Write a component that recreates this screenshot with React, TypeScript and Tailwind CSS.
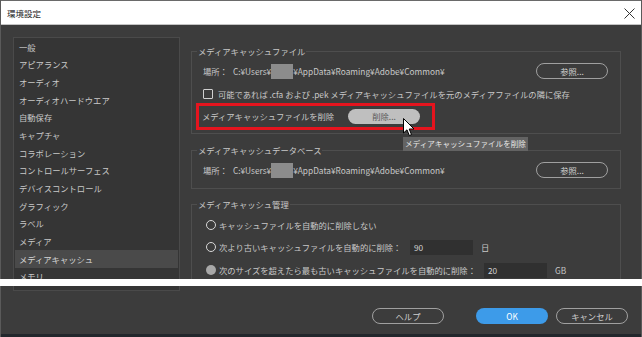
import React from "react";

const items = [
  "一般",
  "アピアランス",
  "オーディオ",
  "オーディオハードウエア",
  "自動保存",
  "キャプチャ",
  "コラボレーション",
  "コントロールサーフェス",
  "デバイスコントロール",
  "グラフィック",
  "ラベル",
  "メディア",
  "メディアキャッシュ",
  "メモリ",
];

const PathRow = () => (
  <div className="flex items-center h-[16px] pl-[7px] pr-[8px] justify-between">
    <div className="flex items-center whitespace-nowrap">
      <span>場所：</span>
      <span className="ml-[5px]">C:¥Users¥</span>
      <span className="inline-block w-[22px] h-[15px] bg-[#8c8c8c]"></span>
      <span>¥AppData¥Roaming¥Adobe¥Common¥</span>
    </div>
    <button className="w-[72px] h-[16px] rounded-full border border-[#a0a0a0] text-[#d0d0d0] flex items-center justify-center">
      参照...
    </button>
  </div>
);

const Radio = ({ filled }: { filled?: boolean }) => (
  <span
    className={
      filled
        ? "w-[10px] h-[10px] rounded-full bg-[#a8a8a8] shrink-0"
        : "w-[10px] h-[10px] rounded-full border-[1.5px] border-[#d8d8d8] shrink-0"
    }
  ></span>
);

export default function App() {
  return (
    <div className="relative w-[642px] h-[337px] overflow-hidden bg-[#3c3c3c] text-[#c8c8c8] text-[8.3px] leading-none font-['Noto_Sans_CJK_JP',sans-serif]">
      {/* upper half of the dialog */}
      <div className="h-[279px] flex flex-col overflow-hidden border-x border-[#5a5a5a]">
        <div className="h-[25px] shrink-0 bg-white border-t border-[#6a6a6a] border-b border-b-[#c4c4c4] flex items-center justify-between pl-[6px] pr-[6px] pt-[1px]">
          <span className="text-[8.5px] text-[#222]">環境設定</span>
          <svg width="11" height="11" viewBox="0 0 11 11">
            <path d="M0.5 0.5 L10.5 10.5 M10.5 0.5 L0.5 10.5" stroke="#333" strokeWidth="1" />
          </svg>
        </div>

        <div className="flex flex-1 pl-[12px] pt-[12px] gap-[11px]">
          {/* category list */}
          <div className="w-[167px] h-[260px] shrink-0 bg-[#353535] border border-[#4a4a4a] px-[1px]">
            {items.map((t) => (
              <div
                key={t}
                className={
                  t === "メディアキャッシュ"
                    ? "h-[17.67px] flex items-center pl-[4px] bg-[#4a4a4a] text-[#d6d6d6]"
                    : "h-[17.67px] flex items-center pl-[4px]"
                }
              >
                {t}
              </div>
            ))}
          </div>

          {/* settings */}
          <div className="w-[430px] flex flex-col pt-[8px]">
            <fieldset className="border border-[#4e4e4e] px-[4px] pb-[3px]">
              <legend className="ml-[1px] px-[1px] leading-[12px]">メディアキャッシュファイル</legend>
              <div className="mt-[6px]">
                <PathRow />
              </div>
              <div className="mt-[8px] h-[14px] flex items-center pl-[7px] gap-[5px] whitespace-nowrap">
                <span className="w-[10px] h-[10px] border-[1.5px] border-[#d0d0d0] rounded-[1px]"></span>
                <span>可能であれば .cfa および .pek メディアキャッシュファイルを元のメディアファイルの隣に保存</span>
              </div>
              <div className="mt-[2px] w-[239px] h-[27px] border-[3px] border-[#e5141e] flex items-center justify-between pl-[3px] pr-[12px]">
                <span className="whitespace-nowrap">メディアキャッシュファイルを削除</span>
                <button className="w-[72px] h-[15px] rounded-full bg-[#bfbfbf] text-[#5a5a5a] flex items-center justify-center">
                  削除...
                </button>
              </div>
            </fieldset>

            <fieldset className="mt-[10px] border border-[#4e4e4e] px-[4px] pb-[10px]">
              <legend className="ml-[1px] px-[1px] leading-[12px]">メディアキャッシュデータベース</legend>
              <div className="mt-[6px]">
                <PathRow />
              </div>
            </fieldset>

            <fieldset className="mt-[9px] border border-[#4e4e4e] px-[4px] h-[200px]">
              <legend className="ml-[1px] px-[1px] leading-[12px]">メディアキャッシュ管理</legend>
              <div className="mt-[7px] h-[16px] flex items-center pl-[10px] gap-[3px] whitespace-nowrap">
                <Radio />
                <span>キャッシュファイルを自動的に削除しない</span>
              </div>
              <div className="mt-[6px] h-[16px] flex items-center pl-[10px] gap-[3px] whitespace-nowrap">
                <Radio />
                <span className="w-[188px]">次より古いキャッシュファイルを自動的に削除：</span>
                <span className="w-[63px] h-[15px] bg-[#303030] flex items-center pl-[4px] text-[#d0d0d0]">90</span>
                <span className="ml-[5px]">日</span>
              </div>
              <div className="mt-[7px] h-[16px] flex items-center pl-[10px] gap-[3px] whitespace-nowrap">
                <Radio filled />
                <span className="w-[262px]">次のサイズを超えたら最も古いキャッシュファイルを自動的に削除：</span>
                <span className="w-[63px] h-[15px] bg-[#303030] flex items-center pl-[4px] text-[#d0d0d0]">20</span>
                <span className="ml-[5px]">GB</span>
              </div>
            </fieldset>
          </div>
        </div>
      </div>

      {/* white gap between the two captures */}
      <div className="h-[7px] bg-white"></div>

      {/* lower half of the dialog */}
      <div className="h-[51px] flex flex-col border-x border-[#5a5a5a]">
        <div className="ml-[12px] w-[167px] h-[5px] bg-[#353535] border-x border-b border-[#4a4a4a]"></div>
        <div className="mt-[17px] flex justify-end pr-[13px]">
          <button className="w-[72px] h-[16px] rounded-full border border-[#a0a0a0] text-[#d0d0d0] flex items-center justify-center">
            ヘルプ
          </button>
          <button className="ml-[32px] w-[72px] h-[16px] rounded-full bg-[#3d9be9] text-white flex items-center justify-center">
            OK
          </button>
          <button className="ml-[8px] w-[72px] h-[16px] rounded-full border border-[#a0a0a0] text-[#d0d0d0] flex items-center justify-center">
            キャンセル
          </button>
        </div>
        <div className="mt-auto h-[3px] bg-[#22272c]"></div>
      </div>

      {/* tooltip */}
      <div className="absolute left-[403px] top-[137px] h-[14px] px-[2px] bg-[#636363] text-[#e8e8e8] text-[7.6px] flex items-center whitespace-nowrap">
        メディアキャッシュファイルを削除
      </div>

      {/* mouse cursor */}
      <svg className="absolute left-[403px] top-[118px]" width="12" height="19" viewBox="0 0 12 19">
        <path d="M0.5 0.5 L0.5 15 L4 11.8 L6.3 17.5 L8.5 16.6 L6.2 11 L11 11 Z" fill="#fff" stroke="#000" strokeWidth="1" />
      </svg>
    </div>
  );
}
